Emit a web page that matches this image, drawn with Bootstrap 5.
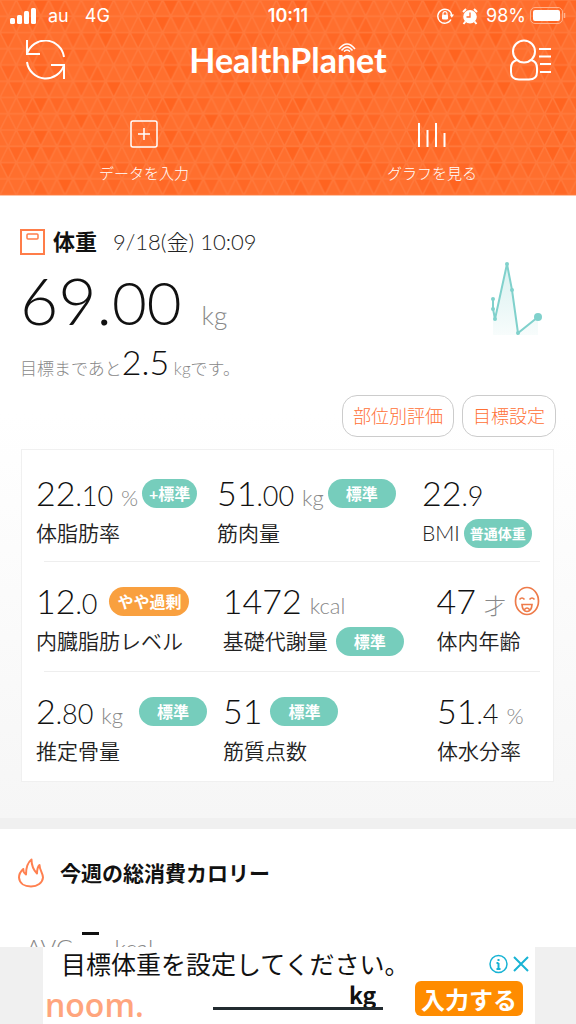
<!DOCTYPE html>
<html lang="ja">
<head>
<meta charset="utf-8">
<meta name="viewport" content="width=device-width, initial-scale=1">
<title>HealthPlanet</title>
<link href="https://cdn.jsdelivr.net/npm/bootstrap@5.3.0/dist/css/bootstrap.min.css" rel="stylesheet">
<style>
  body { font-family: Lato, "Noto Sans CJK JP", sans-serif; color: #111; background: #fff; }
  svg { display: block; flex: none; }
  .hero { background: #ff6f2e; color: #fff; height: 196px; border-bottom: 1px solid #ffc3a6; }
  .hero-pattern { z-index: 0; }
  .hero > :not(.hero-pattern) { position: relative; z-index: 1; }
  .status { font: 19px/32px Inter, sans-serif; height: 32px; padding: 0 10px; }
  .status-side { flex: 1 1 0; }
  .clock { font-weight: 600; font-size: 18px; }
  .carrier { font-weight: 400; font-size: 18px; }
  .brand { font-size: 34px; line-height: 48px; font-weight: 700; }
  .topbar { height: 56px; padding: 0 24px; }
  .waves { right: 31px; top: 7px; }
  .hero-action { color: #fff; font-weight: 300; font-size: 15px; line-height: 22px; gap: 14px; text-decoration: none; padding-top: 32px; }
  .screen { min-height: 0; overflow-y: auto; scrollbar-width: none; }
  .screen::-webkit-scrollbar { display: none; }
  .weight-panel { padding: 32px 20px 36px; background: linear-gradient(#fff 35%, #f6f6f6); border-bottom: 11px solid #f0f0f0; }
  .heading { font-size: 22px; line-height: 28px; font-weight: 700; }
  .heading-sm { font-size: 21px; }
  .date { font-size: 22px; line-height: 28px; font-weight: 300; color: #222; }
  .thin { font-weight: 300; }
  .unit { font-weight: 300; color: #888; }
  .big { font-size: 66px; line-height: 60px; padding: 14px 0 13px; }
  .big span { line-height: 1; }
  .big-dec { font-size: 60px; }
  .big-unit { font-size: 26px; margin-left: 20px; }
  .goal { font-size: 17px; line-height: 36px; color: #888; font-weight: 300; }
  .goal-num { font-size: 34px; line-height: 1; color: #111; }
  .spark { margin: 4px 13px 0 0; }
  .pill-btn { font-size: 18px; line-height: 26px; font-weight: 300; color: #ff7035; background: #fff; border: 1px solid #ccc; border-radius: 15px; padding: 7px 10px; height: 42px; }
  .metrics { background: #fff; border: 1px solid #f0f0f0; padding: 1px 13px 0 14px; margin: 12px 2px 0 1px; }
  .metric-row { display: grid; grid-template-columns: 187fr 214fr 103fr; padding: 22px 0 12px; position: relative; }
  .metric-row:first-child { grid-template-columns: 181fr 205fr 118fr; padding: 24px 0 10px; }
  .metric-row + .metric-row::before { content: ""; position: absolute; top: 0; left: 8px; right: 0; border-top: 1px solid #eee; }
  .metric { white-space: nowrap; }
  .line { height: 36px; display: flex; align-items: center; }
  .val { font-size: 34px; line-height: 36px; font-weight: 300; }
  .val span { line-height: 1; }
  .dec { font-size: 27px; }
  .val .unit { font-size: 22px; margin-left: 8px; }
  .name { font-size: 21px; font-weight: 350; color: #222; margin-top: 4px; }
  .tag { background: #76cdbc; color: #fff; border-radius: 15px; font-size: 16px; line-height: 29px; font-weight: 700; width: 68px; text-align: center; }
  .tag-narrow { width: 55px; }
  .tag-small { font-size: 14px; }
  .tag-warn { background: #f9a03f; width: 80px; margin-left: 12px; }
  .week { padding: 29px 18px 20px; }
  .avg { font-size: 24px; line-height: 32px; padding: 44px 8px 0; gap: 8px; }
  .dash { width: 17px; height: 3px; background: #111; margin-bottom: 29px; }
  .ad { background: #f0f0f0; padding: 0 41px 0 43px; }
  .ad-box { background: #fff; height: 77px; padding: 0 5px 0 2px; }
  .ad-title { font-size: 25px; line-height: 34px; color: #111; padding-left: 16px; }
  .noom { font: 600 32px/36px "Open Sans", sans-serif; color: #ffa57d; padding-top: 6px; }
  .ad-field { width: 170px; margin-left: 38px; font: 700 23px/26px "Noto Sans CJK JP", sans-serif; color: #111; text-align: right; border: 0; border-bottom: 3px solid #222b30; background: none; padding: 0 7px 0 0; height: 29px; }
  .ad-btn { background: #ff8c00; color: #fff; border: 0; border-radius: 6px; font: 700 24px/35px "Noto Sans CJK JP", sans-serif; padding: 0 6px; margin-right: 7px; }
  .bare { background: none; border: 0; padding: 0; color: inherit; }
</style>
</head>
<body class="vh-100 d-flex flex-column">
<header class="hero position-relative overflow-hidden flex-shrink-0">
  <svg class="hero-pattern position-absolute top-0 start-0 w-100 h-100" aria-hidden="true">
    <defs>
      <pattern id="tri" width="128" height="128" patternUnits="userSpaceOnUse" patternTransform="scale(1.016)">
        <path fill="#ff6826" d="M16 0h16l-8 16zM48 0h16l-8 16zM64 0l-8 16h16zM96 0h16l-8 16zM8 16h16l-8 16zM40 16h16l-8 16zM56 16h16l-8 16zM88 16h16l-8 16zM104 16l-8 16h16zM0 32h16l-8 16zM32 32h16l-8 16zM64 32h16l-8 16zM80 32h16l-8 16zM112 32h16l-8 16zM24 48h16l-8 16zM40 48l-8 16h16zM72 48h16l-8 16zM104 48h16l-8 16zM0 64h16l-8 16zM16 64h16l-8 16zM48 64h16l-8 16zM80 64h16l-8 16zM96 64l-8 16h16zM8 80h16l-8 16zM40 80h16l-8 16zM72 80h16l-8 16zM88 80h16l-8 16zM16 96h16l-8 16zM32 96l-8 16h16zM48 96h16l-8 16zM64 96h16l-8 16zM96 96h16l-8 16zM24 112h16l-8 16zM56 112h16l-8 16zM88 112h16l-8 16zM104 112h16l-8 16z"/>
        <path fill="#ff6420" d="M32 0h16l-8 16zM24 16h16l-8 16zM96 32h16l-8 16zM56 48h16l-8 16zM32 64h16l-8 16zM104 80h16l-8 16zM32 96h16l-8 16zM72 112h16l-8 16z"/>
        <path fill="none" stroke="#ff793c" stroke-width="1.5" d="M0 0H128M0 16H128M0 32H128M0 48H128M0 64H128M0 80H128M0 96H128M0 112H128M0 128H128M0 0L64 128M16 0L80 128M32 0L96 128M48 0L112 128M64 0L128 128M80 0L128 96M96 0L128 64M112 0L128 32M0 32L48 128M0 64L32 128M0 96L16 128M128 0L64 128M112 0L48 128M96 0L32 128M80 0L16 128M64 0L0 128M48 0L0 96M32 0L0 64M16 0L0 32M128 32L80 128M128 64L96 128M128 96L112 128"/>
      </pattern>
    </defs>
    <rect width="100%" height="100%" fill="url(#tri)"/>
  </svg>

  <div class="status d-flex">
    <div class="status-side d-flex align-items-center carrier">
      <svg width="26" height="16" fill="#fff"><rect y="10" width="5" height="6" rx="1.5"/><rect x="7" y="7" width="5" height="9" rx="1.5"/><rect x="14" y="3" width="5" height="13" rx="1.5"/><rect x="21" width="5" height="16" rx="1.5"/></svg>
      <span class="ms-2 ps-1">au</span><span class="ms-3">4G</span>
    </div>
    <span class="clock">10:11</span>
    <div class="status-side d-flex align-items-center justify-content-end carrier">
      <svg width="17" height="16" viewBox="0 0 17 16" fill="none" stroke="#fff" stroke-width="1.4"><path d="M14 11.5A7 7 0 1 1 14.7 7"/><path d="M12.6 6.5h4.4l-2.2 3.2z" fill="#fff" stroke="none"/><path d="M6 7V5.6a2 2 0 0 1 4 0V7" stroke-width="1.2"/><rect x="5" y="6.8" width="6" height="4.6" rx=".8" fill="#fff" stroke="none"/></svg>
      <svg class="ms-2" width="16" height="17" viewBox="0 0 16 17"><circle cx="8" cy="8.7" r="6.8" fill="#fff"/><path d="M1 4l3-3M15 4l-3-3M3.500 13.500L1.500 16M12.500 13.500L14.500 16" stroke="#fff" stroke-width="2"/><path d="M8 4.500V9H4.500" fill="none" stroke="#ff6f30" stroke-width="1.300"/></svg>
      <span class="ms-2">98%</span>
      <svg class="ms-1" width="36" height="18" viewBox="0 0 36 18"><rect x=".5" y=".5" width="32" height="16" rx="4.500" fill="none" stroke="#ffb28c"/><rect x="3" y="3" width="27" height="11" rx="2" fill="#fff"/><path d="M34.500 6v5" stroke="#ffb28c" stroke-width="1.500"/></svg>
    </div>
  </div>

  <div class="topbar d-flex justify-content-between align-items-center">
    <button class="bare" aria-label="更新"><svg width="42" height="40" viewBox="0 0 42 40" fill="none" stroke="#fff" stroke-width="2"><path d="M3 0v14h13M3 14A19 19 0 0 1 40 17M40 39V25H27M40 25A19 19 0 0 1 3 22"/></svg></button>
    <h1 class="brand m-0 position-relative">HealthPlanet
      <svg class="waves position-absolute" width="18" height="9" viewBox="0 0 18 9" fill="none" stroke="#fff" stroke-width="1.500"><path d="M1 6Q9-4 17 6M3.500 7.500Q9 .5 14.500 7.500M6 8.600Q9 5.500 12 8.600"/></svg>
    </h1>
    <button class="bare" aria-label="プロフィール"><svg width="42" height="42" viewBox="0 0 42 42" fill="none" stroke="#fff" stroke-width="2"><circle cx="14" cy="12.500" r="11"/><path d="M7 21C3 22 1 25 1 29v4c0 5 3 7.500 8 7.500h10c5 0 8-2.500 8-7.500v-4c0-4-2-7-6-8M29 10h12M29 17.500h12M30 25h11M30 33h11"/></svg></button>
  </div>

  <nav class="d-flex">
    <a href="#" class="hero-action w-50 d-flex flex-column align-items-center">
      <svg width="28" height="28" fill="none" stroke="#fff" stroke-width="1.500"><rect x="1" y="1" width="26" height="26" rx="2"/><path d="M8 14h12M14 8v12"/></svg>
      データを入力
    </a>
    <a href="#" class="hero-action w-50 d-flex flex-column align-items-center">
      <svg width="28" height="28" fill="none" stroke="#fff" stroke-width="2"><path d="M1 3v24M9.500 10v17M18 3v24M26.500 13v14"/></svg>
      グラフを見る
    </a>
  </nav>
</header>

<main class="screen flex-fill">
  <section class="weight-panel">
    <div class="d-flex align-items-center">
      <svg width="25" height="26" fill="none" stroke="#ff7d49" stroke-width="2"><rect x="1" y="1" width="23" height="24"/><rect x="7" y="5" width="11" height="5" rx="1" stroke-width="1.500"/></svg>
      <h2 class="heading m-0 ms-2">体重</h2>
      <span class="date ms-3">9/18(金) 10:09</span>
    </div>
    <div class="d-flex justify-content-between">
      <div>
        <div class="big thin">69.<span class="big-dec">00</span><span class="unit big-unit">kg</span></div>
        <p class="goal m-0">目標まであと<span class="goal-num">2.5</span> kgです。</p>
      </div>
      <svg class="spark" width="53" height="76" viewBox="0 0 53 76">
        <defs><linearGradient id="fade" x2="0" y2="1"><stop stop-color="#7fd0cb" stop-opacity=".3"/><stop offset="1" stop-color="#7fd0cb" stop-opacity=".06"/></linearGradient></defs>
        <path d="M3 39v10l2 10L17 4l5 26 6 43 20-16v18H3z" fill="url(#fade)"/>
        <path d="M3 39v10l2 10L17 4l5 26 6 43 20-16" fill="none" stroke="#80d1cc" stroke-width="2"/>
        <g fill="#80d1cc"><circle cx="3" cy="39" r="2"/><circle cx="3" cy="49" r="2"/><circle cx="5" cy="59" r="2"/><circle cx="17" cy="4" r="2"/><circle cx="22" cy="30" r="2"/><circle cx="28" cy="73" r="2"/><circle cx="48" cy="57" r="4"/></g>
      </svg>
    </div>
    <div class="d-flex justify-content-end gap-2 mt-2">
      <button class="pill-btn">部位別評価</button>
      <button class="pill-btn">目標設定</button>
    </div>

    <div class="metrics">
      <div class="metric-row">
        <div class="metric">
          <div class="line"><span class="val">22<span class="dec">.10</span><span class="unit">%</span></span><span class="tag tag-narrow ms-1">+標準</span></div>
          <div class="line name">体脂肪率</div>
        </div>
        <div class="metric">
          <div class="line"><span class="val">51<span class="dec">.00</span><span class="unit">kg</span></span><span class="tag ms-1">標準</span></div>
          <div class="line name">筋肉量</div>
        </div>
        <div class="metric">
          <div class="line"><span class="val">22<span class="dec">.9</span></span></div>
          <div class="line name"><span class="thin">BMI</span><span class="tag tag-small ms-1">普通体重</span></div>
        </div>
      </div>
      <div class="metric-row">
        <div class="metric">
          <div class="line"><span class="val">12<span class="dec">.0</span></span><span class="tag tag-warn">やや過剰</span></div>
          <div class="line name">内臓脂肪レベル</div>
        </div>
        <div class="metric">
          <div class="line"><span class="val">1472<span class="unit">kcal</span></span></div>
          <div class="line name">基礎代謝量<span class="tag ms-2">標準</span></div>
        </div>
        <div class="metric">
          <div class="line"><span class="val">47<span class="unit">才</span></span>
            <svg class="ms-2" width="26" height="30" viewBox="0 0 26 30" fill="none" stroke="#ee7b4a" stroke-width="1.700"><ellipse cx="13" cy="15" rx="11.500" ry="13.500"/><path d="M5.500 13.500q2.500-3 5 0M15.500 13.500q2.500-3 5 0M8 18.500h10q-.5 7-5 7t-5-7zM10.500 23.500q2.500-3 5 0"/></svg>
          </div>
          <div class="line name">体内年齢</div>
        </div>
      </div>
      <div class="metric-row">
        <div class="metric">
          <div class="line"><span class="val">2<span class="dec">.80</span><span class="unit">kg</span></span><span class="tag ms-3">標準</span></div>
          <div class="line name">推定骨量</div>
        </div>
        <div class="metric">
          <div class="line"><span class="val">51</span><span class="tag ms-2">標準</span></div>
          <div class="line name">筋質点数</div>
        </div>
        <div class="metric">
          <div class="line"><span class="val">51<span class="dec">.4</span><span class="unit">%</span></span></div>
          <div class="line name">体水分率</div>
        </div>
      </div>
    </div>
  </section>

  <section class="week">
    <div class="d-flex align-items-center">
      <svg width="26" height="30" viewBox="0 0 26 30" fill="none" stroke="#ff8050" stroke-width="2" stroke-linejoin="round"><path d="M13.500 1.500C9 5 8 10 8 16.500 6 15 5 13 5.300 11 2.500 13.500 1 16 1 19.500c.5 6 5.500 9 12 9s11.500-3.500 12-9c0-4-3.500-7.500-3.500-12.500-2 2-2.500 5-2.500 8.500C15.500 12 13.500 8 13.500 1.500z"/></svg>
      <h2 class="heading heading-sm m-0 ms-3">今週の総消費カロリー</h2>
    </div>
    <div class="avg unit d-flex align-items-end"><span>AVG</span><span class="dash"></span><span class="ms-2">kcal</span></div>
  </section>
</main>

<aside class="ad flex-shrink-0">
  <div class="ad-box">
    <div class="d-flex justify-content-between align-items-center">
      <label class="ad-title" for="target">目標体重を設定してください。</label>
      <div class="d-flex gap-1">
        <button class="bare" aria-label="広告情報"><svg width="19" height="20" fill="none" stroke="#18b3d4" stroke-width="1.500"><circle cx="9.500" cy="10" r="8.500"/><path d="M9.500 9v6M7.500 9h2M7.500 15h4M9.500 5v2" stroke-width="2"/></svg></button>
        <button class="bare" aria-label="閉じる"><svg width="18" height="20" stroke="#18b3d4" stroke-width="2"><path d="M2 3l14 14M16 3L2 17"/></svg></button>
      </div>
    </div>
    <div class="d-flex justify-content-between align-items-start">
      <span class="noom">noom.</span>
      <input class="ad-field" id="target" value="kg">
      <button class="ad-btn">入力する</button>
    </div>
  </div>
</aside>
<script src="https://cdn.jsdelivr.net/npm/bootstrap@5.3.0/dist/js/bootstrap.bundle.min.js"></script>
</body>
</html>
